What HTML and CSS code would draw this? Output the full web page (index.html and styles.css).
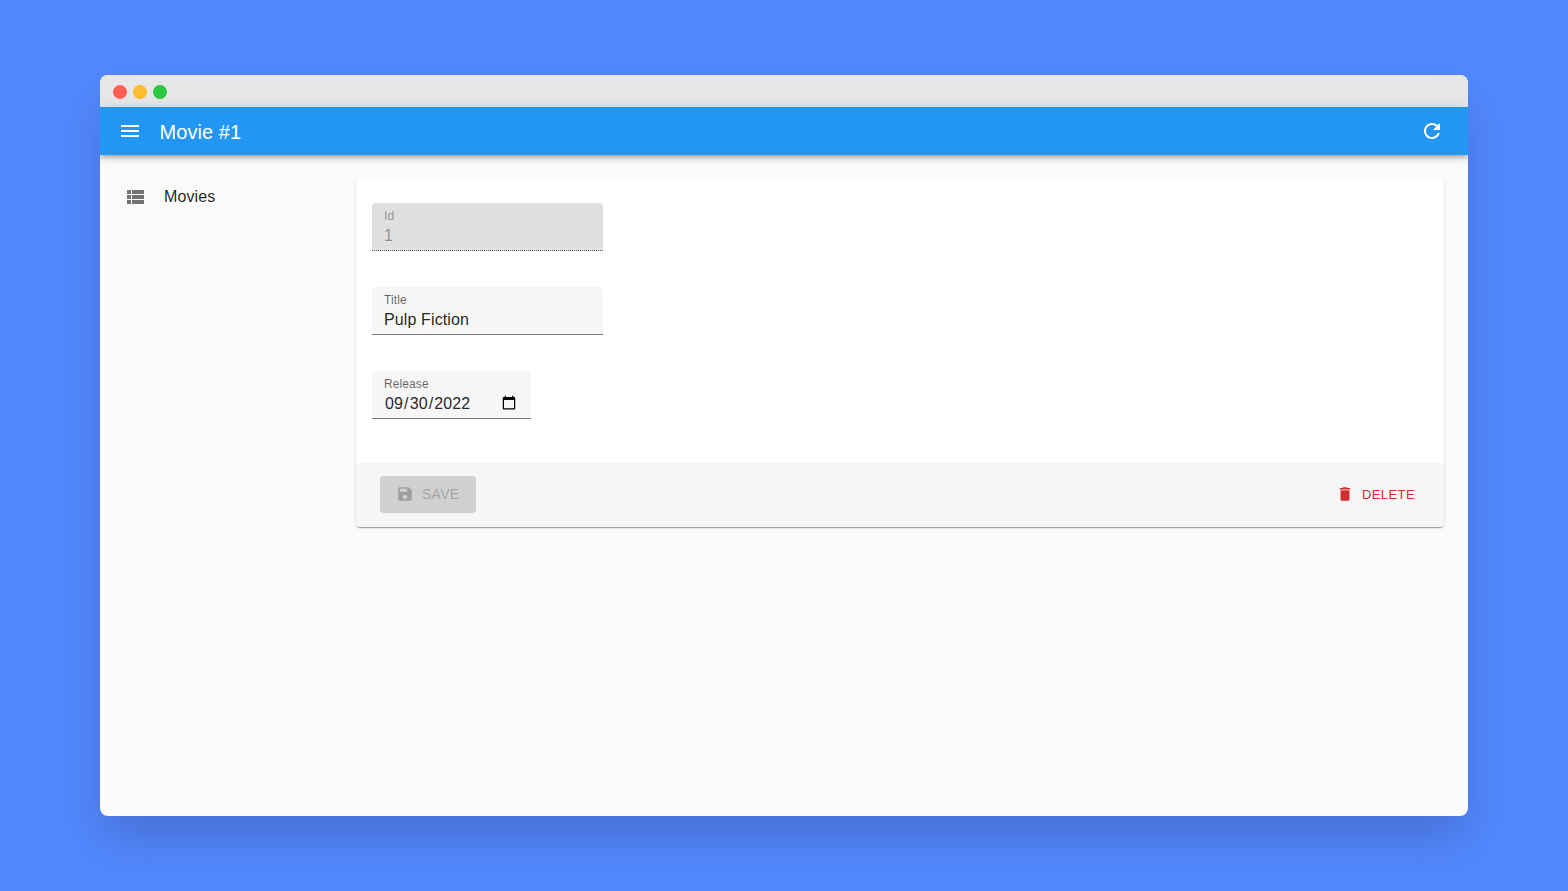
FILE: index.html
```html
<!DOCTYPE html>
<html lang="en">

<head>
    <meta charset="UTF-8">
    <title>Movie #1</title>
    <link rel="stylesheet" href="styles.css">
</head>

<body>
    <div class="window">
        <div class="titlebar">
            <span class="dot red"></span>
            <span class="dot yellow"></span>
            <span class="dot green"></span>
        </div>
        <header class="appbar">
            <svg class="menu-icon" viewBox="0 0 24 24"><path d="M3 18h18v-2H3v2zm0-5h18v-2H3v2zm0-7v2h18V6H3z"/></svg>
            <span class="appbar-title">Movie #1</span>
            <svg class="refresh-icon" viewBox="0 0 24 24"><path d="M17.65 6.35C16.2 4.9 14.21 4 12 4c-4.42 0-7.99 3.58-7.99 8s3.57 8 7.99 8c3.73 0 6.84-2.55 7.73-6h-2.08c-.82 2.33-3.04 4-5.65 4-3.31 0-6-2.69-6-6s2.69-6 6-6c1.66 0 3.14.69 4.22 1.78L13 11h7V4l-2.35 2.35z"/></svg>
        </header>
        <div class="layout">
            <nav class="sidebar">
                <a class="nav-item">
                    <svg class="nav-icon" viewBox="0 0 24 24"><path d="M4 14h4v-4H4v4zm0 5h4v-4H4v4zM4 9h4V5H4v4zm5 5h12v-4H9v4zm0 5h12v-4H9v4zM9 5v4h12V5H9z"/></svg>
                    <span>Movies</span>
                </a>
            </nav>
            <main class="content">
                <form class="card">
                    <div class="fields">
                        <label class="field field-disabled">
                            <span class="field-label">Id</span>
                            <input type="text" value="1" disabled>
                        </label>
                        <label class="field">
                            <span class="field-label">Title</span>
                            <input type="text" value="Pulp Fiction">
                        </label>
                        <label class="field field-date">
                            <span class="field-label">Release</span>
                            <input type="date" value="2022-09-30">
                        </label>
                    </div>
                    <div class="toolbar">
                        <button type="button" class="btn-save" disabled>
                            <svg viewBox="0 0 24 24"><path d="M17 3H5c-1.11 0-2 .9-2 2v14c0 1.1.89 2 2 2h14c1.1 0 2-.9 2-2V7l-4-4zm-5 16c-1.66 0-3-1.34-3-3s1.34-3 3-3 3 1.34 3 3-1.34 3-3 3zm3-10H5V5h10v4z"/></svg>
                            Save
                        </button>
                        <button type="button" class="btn-delete">
                            <svg viewBox="0 0 24 24"><path d="M6 19c0 1.1.9 2 2 2h8c1.1 0 2-.9 2-2V7H6v12zM19 4h-3.5l-1-1h-5l-1 1H5v2h14V4z"/></svg>
                            Delete
                        </button>
                    </div>
                </form>
            </main>
        </div>
    </div>
</body>

</html>
```

FILE: styles.css
```css
* {
    box-sizing: border-box;
}

html,
body {
    height: 100%;
}

body {
    margin: 0;
    padding: 75px 100px;
    background-color: #5389ff;
    font-family: "Liberation Sans", Arial, sans-serif;
    overflow: hidden;
}

.window {
    height: 741px;
    display: flex;
    flex-direction: column;
    border-radius: 8px;
    overflow: hidden;
    background-color: #fafafa;
    box-shadow: 0 24px 50px rgba(40, 60, 120, 0.3);
}

.titlebar {
    height: 32px;
    flex: none;
    display: flex;
    align-items: center;
    gap: 6px;
    padding-left: 13px;
    padding-top: 2px;
    background-color: #e7e7e7;
}

.dot {
    width: 14px;
    height: 14px;
    border-radius: 50%;
}

.red {
    background-color: #ff5f57;
}

.yellow {
    background-color: #febc2e;
}

.green {
    background-color: #28c840;
}

.appbar {
    height: 48px;
    flex: none;
    display: flex;
    align-items: center;
    padding: 0 24px 0 18px;
    background-color: #2196f3;
    color: #fff;
    box-shadow: 0 2px 4px -1px rgba(0, 0, 0, 0.2), 0 4px 5px 0 rgba(0, 0, 0, 0.14), 0 1px 10px 0 rgba(0, 0, 0, 0.12);
    position: relative;
}

.appbar svg {
    fill: #fff;
    flex: none;
}

.menu-icon {
    width: 24px;
    height: 24px;
}

.appbar-title {
    flex: 1;
    margin-left: 17.5px;
    padding-top: 2px;
    font-size: 20px;
    line-height: 46px;
    letter-spacing: 0.05px;
}

.refresh-icon {
    width: 24px;
    height: 24px;
}

.layout {
    flex: 1;
    display: flex;
}

.sidebar {
    width: 256px;
    flex: none;
    padding-top: 24px;
}

.nav-item {
    display: flex;
    align-items: center;
    height: 36px;
    padding-left: 23px;
    font-size: 16px;
    letter-spacing: 0.1px;
    color: rgba(0, 0, 0, 0.87);
}

.nav-icon {
    width: 24px;
    height: 24px;
    margin-right: 17px;
    fill: rgba(0, 0, 0, 0.54);
}

.content {
    flex: 1;
    padding: 24px 24px 0 0;
}

.card {
    background-color: #fff;
    border-radius: 4px;
    overflow: hidden;
    box-shadow: 0 2px 1px -1px rgba(0, 0, 0, 0.2), 0 1px 1px 0 rgba(0, 0, 0, 0.14), 0 1px 3px 0 rgba(0, 0, 0, 0.12);
}

.fields {
    display: flex;
    flex-direction: column;
    align-items: flex-start;
    gap: 36px;
    padding: 24px 16px 44px;
}

.field {
    width: 231px;
    height: 48px;
    display: block;
    padding: 6px 12px 0;
    background-color: #f6f6f6;
    border-radius: 4px 4px 0 0;
    border-bottom: 1px solid rgba(0, 0, 0, 0.5);
}

.field-date {
    width: 159px;
}

.field-disabled {
    background-color: #dfdfdf;
    border-bottom: 1px dotted rgba(0, 0, 0, 0.55);
}

.field-label {
    display: block;
    font-size: 12px;
    line-height: 14px;
    letter-spacing: 0.1px;
    color: rgba(0, 0, 0, 0.6);
}

.field-disabled .field-label {
    color: rgba(0, 0, 0, 0.38);
}

.field input {
    display: block;
    width: 100%;
    height: 23px;
    margin-top: 1px;
    padding: 0;
    border: none;
    outline: none;
    background: transparent;
    font-family: inherit;
    font-size: 16px;
    letter-spacing: 0.12px;
    color: rgba(0, 0, 0, 0.87);
}

.field input::-webkit-calendar-picker-indicator {
    margin-top: -2px;
}

.field input:disabled {
    color: rgba(0, 0, 0, 0.38);
}

.toolbar {
    height: 64px;
    display: flex;
    align-items: center;
    justify-content: space-between;
    padding: 0 24px 2px;
    background-color: #f6f6f6;
}

.toolbar button {
    display: flex;
    align-items: center;
    border: none;
    border-radius: 4px;
    font-family: inherit;
    font-size: 14px;
    text-transform: uppercase;
}

.toolbar svg {
    fill: currentColor;
    flex: none;
}

.btn-save {
    width: 96px;
    height: 37px;
    padding: 0 0 0 16px;
    gap: 8px;
    background-color: #d0d0d0;
    color: rgba(0, 0, 0, 0.24);
    letter-spacing: 0.25px;
}

.btn-save svg {
    width: 18px;
    height: 18px;
}

.btn-delete {
    height: 30px;
    padding: 0 5px;
    gap: 8px;
    background: transparent;
    color: #d32f2f;
    font-size: 13px !important;
    letter-spacing: 0.4px;
}

.btn-delete svg {
    width: 18px;
    height: 18px;
}
```
